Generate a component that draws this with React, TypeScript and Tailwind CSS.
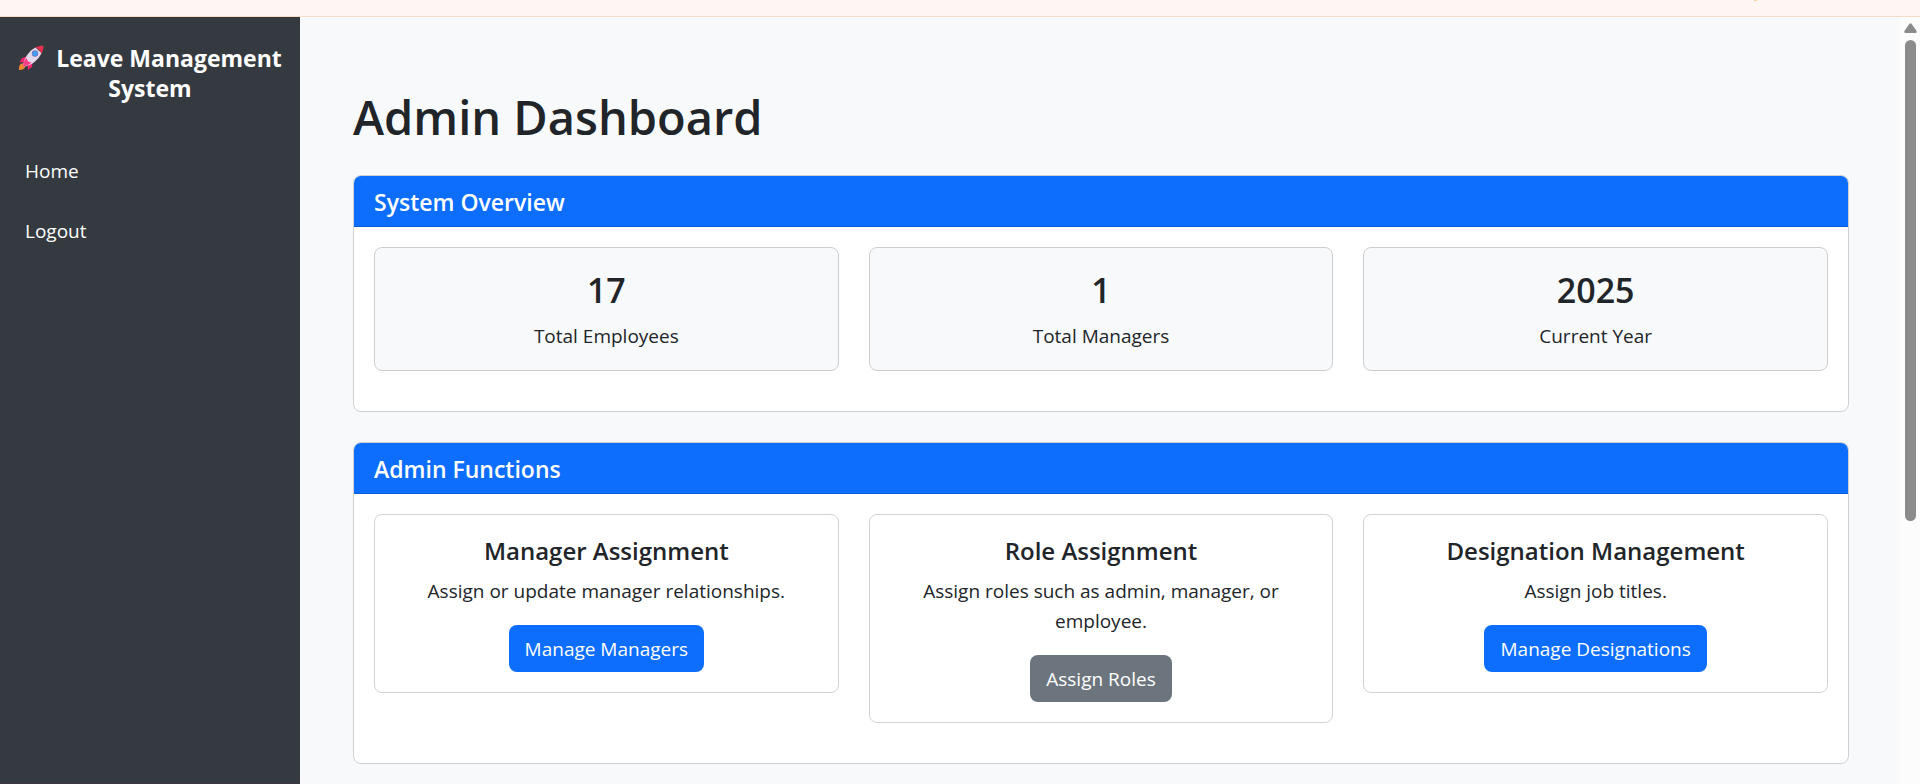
import type { ReactNode } from "react";

const stats = [
  { value: "17", label: "Total Employees" },
  { value: "1", label: "Total Managers" },
  { value: "2025", label: "Current Year" },
];

const functions = [
  { title: "Manager Assignment", text: "Assign or update manager relationships.", action: "Manage Managers", tone: "bg-[#0d6efd]" },
  { title: "Role Assignment", text: "Assign roles such as admin, manager, or employee.", action: "Assign Roles", tone: "bg-[#6c757d]" },
  { title: "Designation Management", text: "Assign job titles.", action: "Manage Designations", tone: "bg-[#0d6efd]" },
];

function Rocket() {
  return (
    <svg viewBox="0 0 26 26" className="mr-3 inline-block size-[26px] align-[-4px]" aria-hidden="true">
      <path d="M1 25c-.3-3 .5-6 3-6.500 2.500-.4 4 1.500 3.200 3.500C6.500 24.200 4 25.200 1 25z" fill="#f0882f" />
      <path d="M8 11.500 4 13 1.500 17.500l5-.5zM14.500 18 14 22l-4 3-.5-5.500z" fill="#f0256c" />
      <path d="M5 20.500c1-7 5.500-14.500 12.500-18l6 5.500C20.500 15 13.500 20.500 6 21.500z" fill="#e4d8ea" />
      <path d="M5 21.500c.2-3 1-6 3.500-8.500l1.500 3.500 3.500 1c-2.500 2.300-5 3.600-8.500 4z" fill="#fa3d86" />
      <path d="M17.500 2.500C20 1.200 23 .6 25.400.8c.2 2.600-.5 5.500-2 8-.8-2.800-3-5.300-5.900-6.300z" fill="#ec2f4b" />
      <circle cx="17" cy="8.500" r="3.200" fill="#7c6fb0" />
      <circle cx="17" cy="8.500" r="2.500" fill="#3f9cf5" />
    </svg>
  );
}

function Panel({ title, children }: { title: string; children: ReactNode }) {
  return (
    <section className="mb-[30px] overflow-hidden rounded-lg border border-[#cfd0d1] bg-white">
      <h2 className="border-b border-[#0b5ed7] bg-[#0d6efd] px-5 pt-[11px] pb-[9px] text-[23px] leading-[30px] font-semibold text-white">
        {title}
      </h2>
      <div className="grid grid-cols-3 items-start gap-[30px] px-5 pt-5 pb-10">{children}</div>
    </section>
  );
}

export default function App() {
  return (
    <div className="flex h-screen flex-col overflow-hidden bg-[#f8f9fa] font-['Open_Sans','Noto_Sans',sans-serif] text-[#212529]">
      <div className="flex h-[17px] shrink-0 justify-end border-b border-[#f5dcc6] bg-[#fff6f3] pr-[163px]">
        <span className="h-px w-[3px] bg-[#fbd3a0]" />
      </div>
      <div className="flex min-h-0 flex-1">
        <aside className="w-[300px] shrink-0 border-b border-[#3d353f] bg-[#343a40] text-white">
          <h1 className="px-[10px] pt-[26px] pb-[38px] text-center text-[23px] leading-[30px] font-bold">
            <Rocket />
            Leave Management System
          </h1>
          <nav className="flex flex-col text-[19px] leading-[30px]">
            <a href="#home" className="px-[25px] py-[15px]">Home</a>
            <a href="#logout" className="px-[25px] py-[15px]">Logout</a>
          </nav>
        </aside>
        <main className="min-w-0 flex-1 overflow-hidden pt-[70px] pr-[51px] pl-[53px]">
          <h1 className="mb-7 text-[47px] leading-[60px] font-semibold">Admin Dashboard</h1>
          <Panel title="System Overview">
            {stats.map((s) => (
              <div key={s.label} className="rounded-lg border border-[#cbcdce] bg-[#f8f9fa] px-5 pt-[21px] pb-[19px] text-center">
                <h3 className="mb-[10px] text-[34px] leading-[42px] font-semibold">{s.value}</h3>
                <p className="text-[19px] leading-[30px]">{s.label}</p>
              </div>
            ))}
          </Panel>
          <Panel title="Admin Functions">
            {functions.map((f) => (
              <div key={f.title} className="rounded-lg border border-[#d3d3d4] bg-white px-5 pt-[21px] pb-5 text-center">
                <h3 className="mb-[10px] text-2xl leading-[30px] font-semibold">{f.title}</h3>
                <p className="mb-[19px] text-[19px] leading-[30px]">{f.text}</p>
                <button type="button" className={`mx-auto block rounded-lg px-4 pt-[9px] pb-[7px] text-[19px] leading-[31px] text-white ${f.tone}`}>
                  {f.action}
                </button>
              </div>
            ))}
          </Panel>
        </main>
        <div className="flex w-5 shrink-0 flex-col items-center bg-[#fcfcfc] pt-[6px] pl-px" aria-hidden="true">
          <svg viewBox="0 0 13 10" className="h-[10px] w-[13px]">
            <path d="M5.300 1Q6.500-.6 7.700 1L12.400 7.800Q13.400 10 11.300 10H1.700Q-.4 10 .6 7.800z" fill="#8b8b8b" />
          </svg>
          <div className="mt-[7px] h-[63.2%] w-[11px] rounded-full bg-[#8b8b8b]" />
        </div>
      </div>
    </div>
  );
}
